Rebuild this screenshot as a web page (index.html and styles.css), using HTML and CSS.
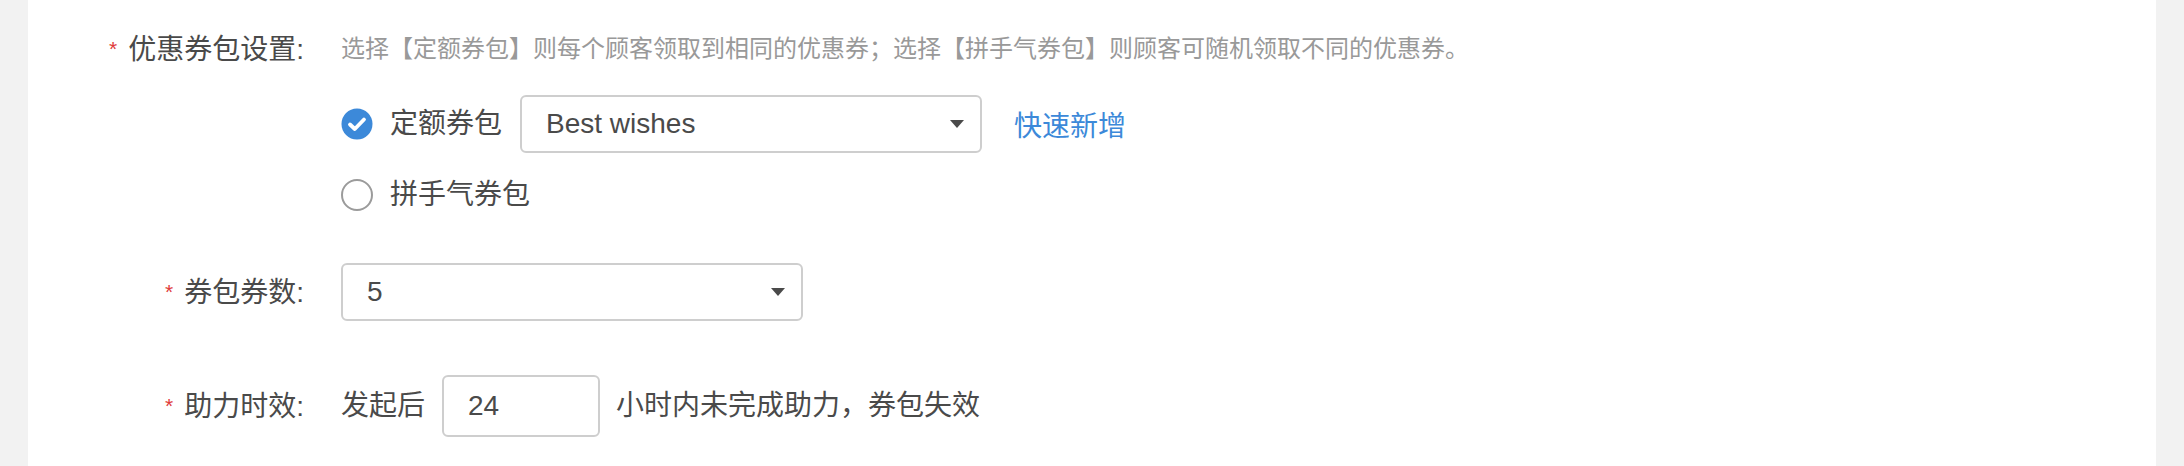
FILE: index.html
```html
<!DOCTYPE html>
<html lang="zh-CN">
<head>
<meta charset="utf-8">
<title>优惠券包设置</title>
<link rel="stylesheet" href="styles.css">
</head>
<body>
<div class="panel">
  <div class="form">
    <div class="item item-top">
      <div class="label"><span class="req">*</span>优惠券包设置:</div>
      <div class="control">
        <div class="hint">选择【定额券包】则每个顾客领取到相同的优惠券；选择【拼手气券包】则顾客可随机领取不同的优惠券。</div>
        <div class="option option-fixed">
          <span class="check checked">
            <svg viewBox="0 0 32 32" width="32" height="32"><circle cx="16" cy="16" r="15.5" fill="#3c89d9"/><polyline points="9,16.5 13.8,21 23,11.5" fill="none" stroke="#fff" stroke-width="3.8" stroke-linecap="round" stroke-linejoin="round"/></svg>
          </span>
          <span class="opt-text">定额券包</span>
          <div class="select select-wide"><span class="value">Best wishes</span><span class="caret"></span></div>
          <span class="link">快速新增</span>
        </div>
        <div class="option option-random">
          <span class="check radio"></span>
          <span class="opt-text">拼手气券包</span>
        </div>
      </div>
    </div>
    <div class="item item-count">
      <div class="label"><span class="req">*</span>券包券数:</div>
      <div class="control">
        <div class="select"><span class="value">5</span><span class="caret"></span></div>
      </div>
    </div>
    <div class="item item-time">
      <div class="label"><span class="req">*</span>助力时效:</div>
      <div class="control inline">
        <span class="text">发起后</span>
        <div class="input"><span class="value">24</span></div>
        <span class="text">小时内未完成助力，券包失效</span>
      </div>
    </div>
  </div>
</div>
</body>
</html>
```
FILE: styles.css
```css
html, body {
  margin: 0;
  padding: 0;
  background: #f2f2f2;
}
body {
  font-family: "Liberation Sans", "Noto Sans CJK SC", sans-serif;
  color: #4a4a4a;
}
.panel {
  margin: 0 28px;
  background: #fff;
  height: 466px;
  box-sizing: border-box;
}
.form {
  padding-top: 29px;
}
.item {
  display: flex;
  align-items: center;
}
.item-top {
  align-items: flex-start;
}
.item-count {
  margin-top: 48px;
}
.item-time {
  margin-top: 54px;
}
.label {
  width: 276px;
  flex: none;
  text-align: right;
  font-size: 28px;
  line-height: 40px;
  color: #4a4a4a;
  white-space: nowrap;
}
.req {
  color: #e03a3a;
  font-size: 21px;
  margin-right: 11px;
  vertical-align: 3px;
}
.control {
  margin-left: 37px;
}
.hint {
  font-size: 24px;
  line-height: 40px;
  color: #999;
  white-space: nowrap;
}
.option {
  display: flex;
  align-items: center;
  font-size: 28px;
}
.option-fixed {
  margin-top: 26px;
  height: 58px;
}
.option-random {
  margin-top: 22px;
  height: 40px;
}
.check {
  width: 32px;
  height: 32px;
  flex: none;
  display: block;
  box-sizing: border-box;
}
.check svg {
  display: block;
}
.radio {
  border: 2px solid #9b9b9b;
  border-radius: 50%;
  background: #fff;
}
.opt-text {
  margin-left: 17px;
  line-height: 40px;
  white-space: nowrap;
}
.select {
  width: 462px;
  height: 58px;
  box-sizing: border-box;
  border: 2px solid #cecece;
  border-radius: 6px;
  display: flex;
  align-items: center;
  justify-content: space-between;
  padding: 0 16px 0 24px;
  font-size: 28px;
  color: #4a4a4a;
}
.select-wide {
  margin-left: 18px;
}
.caret {
  width: 0;
  height: 0;
  border-left: 7px solid transparent;
  border-right: 7px solid transparent;
  border-top: 8px solid #4a4a4a;
}
.link {
  margin-left: 32px;
  color: #3c89d9;
  font-size: 28px;
  white-space: nowrap;
}
.inline {
  display: flex;
  align-items: center;
  font-size: 28px;
}
.text {
  white-space: nowrap;
  line-height: 40px;
}
.input {
  width: 158px;
  height: 62px;
  box-sizing: border-box;
  border: 2px solid #cecece;
  border-radius: 6px;
  margin: 0 16px 0 17px;
  display: flex;
  align-items: center;
  padding-left: 24px;
  font-size: 28px;
  color: #4a4a4a;
}
```
